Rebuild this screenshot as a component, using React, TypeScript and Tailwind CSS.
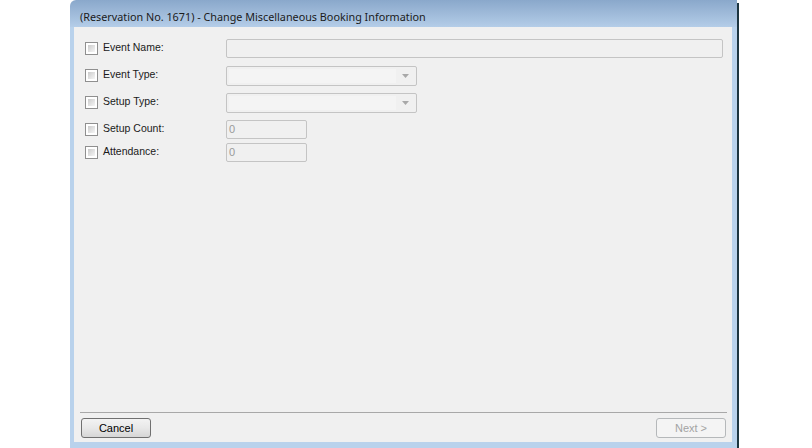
import React from "react";

const labelFont = { fontFamily: '"Liberation Sans", Arial, sans-serif' };

function CheckBox() {
  return (
    <div className="w-[13px] h-[13px] border border-[#8f8f8f] bg-white p-[2px] shrink-0">
      <div className="w-full h-full bg-gradient-to-br from-[#cbcbcb] to-[#f6f6f6]" />
    </div>
  );
}

function Row({
  label,
  height,
  mt,
  children,
}: {
  label: string;
  height: number;
  mt: string;
  children: React.ReactNode;
}) {
  return (
    <div className={`flex items-start ${mt}`} style={{ height }}>
      <div className="flex items-center w-[152px] h-[13px] mt-[3px] pl-[11px] shrink-0">
        <CheckBox />
        <span
          className="ml-[5px] text-[10.5px] leading-none text-[#1a1a1a] -mt-[3px]"
          style={labelFont}
        >
          {label}
        </span>
      </div>
      {children}
    </div>
  );
}

function TextBox({ w, h, value }: { w: string; h: string; value?: string }) {
  return (
    <div
      className={`${w} ${h} border border-[#c4c4c4] rounded-[2px] bg-[#f0f0f0] flex items-center pl-[2px] text-[11px] text-[#9a9a9a]`}
      style={labelFont}
    >
      {value}
    </div>
  );
}

function Combo() {
  return (
    <div className="w-[191px] h-[20px] border border-[#c4c4c4] rounded-[2px] bg-[#f0f0f0] flex p-[2px]">
      <div className="flex-1 bg-[#f4f4f4]" />
      <div className="w-[18px] flex items-center justify-center">
        <svg width="7" height="4" viewBox="0 0 7 4">
          <path d="M0 0 L7 0 L3.5 4 Z" fill="#a8a8a8" />
        </svg>
      </div>
    </div>
  );
}

export default function App() {
  return (
    <div className="w-[812px] h-[448px] bg-white flex overflow-hidden">
      <div className="w-[70px] shrink-0" />
      <div className="flex shrink-0">
        <div className="w-[667px] h-[448px] flex flex-col">
          <div className="h-[27px] shrink-0 bg-gradient-to-b from-[#8aa8cb] to-[#b4cde8] flex items-center pl-[10px] rounded-tl-[6px]">
            <span
              className="text-[10.8px] text-[#1b1b1b] mt-[8px]"
              style={{ fontFamily: '"Noto Sans", "Open Sans", sans-serif' }}
            >
              (Reservation No. 1671) - Change Miscellaneous Booking Information
            </span>
          </div>
          <div className="flex flex-1 min-h-0 bg-[#b9d2ec]">
            <div className="w-[4px] shrink-0" />
            <div className="flex-1 flex flex-col bg-[#f0f0f0] mb-[6px]">
              <Row label="Event Name:" height={19} mt="mt-[12px]">
                <TextBox w="w-[497px]" h="h-[19px]" />
              </Row>
              <Row label="Event Type:" height={20} mt="mt-[8px]">
                <Combo />
              </Row>
              <Row label="Setup Type:" height={20} mt="mt-[7px]">
                <Combo />
              </Row>
              <Row label="Setup Count:" height={19} mt="mt-[7px]">
                <TextBox w="w-[81px]" h="h-[19px]" value="0" />
              </Row>
              <Row label="Attendance:" height={19} mt="mt-[4px]">
                <TextBox w="w-[81px]" h="h-[19px]" value="0" />
              </Row>
              <div className="flex-1" />
              <div className="h-[1px] bg-[#a8a8a8] ml-[6px] mr-[5px]" />
              <div className="flex justify-between pl-[7px] pr-[6px] mt-[5px] mb-[4px]">
                <div
                  className="w-[70px] h-[20px] border border-[#707070] rounded-[3px] bg-gradient-to-b from-[#f3f3f3] via-[#e8e8e8] to-[#d6d6d6] flex items-center justify-center text-[11px] text-black"
                  style={labelFont}
                >
                  Cancel
                </div>
                <div
                  className="w-[70px] h-[20px] border border-[#b5b8ba] rounded-[3px] bg-[#f4f4f4] flex items-center justify-center text-[11px] text-[#a3a3a3]"
                  style={labelFont}
                >
                  Next &gt;
                </div>
              </div>
            </div>
            <div className="w-[5px] shrink-0" />
          </div>
        </div>
        <div className="w-[2px] h-[448px] bg-[#1d3540] mt-[3px]" />
      </div>
    </div>
  );
}
